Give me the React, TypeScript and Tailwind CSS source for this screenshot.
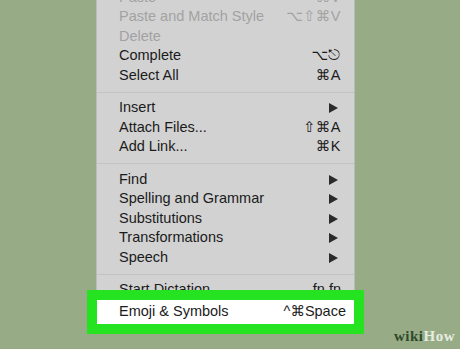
import type { ReactNode } from "react";

type Item = {
  label: string;
  shortcut?: string;
  submenu?: boolean;
  disabled?: boolean;
};

const groups: Item[][] = [
  [
    { label: "Paste", shortcut: "⌘V", disabled: true },
    { label: "Paste and Match Style", shortcut: "⌥⇧⌘V", disabled: true },
    { label: "Delete", disabled: true },
    { label: "Complete", shortcut: "⌥⎋" },
    { label: "Select All", shortcut: "⌘A" },
  ],
  [
    { label: "Insert", submenu: true },
    { label: "Attach Files...", shortcut: "⇧⌘A" },
    { label: "Add Link...", shortcut: "⌘K" },
  ],
  [
    { label: "Find", submenu: true },
    { label: "Spelling and Grammar", submenu: true },
    { label: "Substitutions", submenu: true },
    { label: "Transformations", submenu: true },
    { label: "Speech", submenu: true },
  ],
];

function Row({ item }: { item: Item }) {
  const color = item.disabled ? "text-[#a2a2a2]" : "text-[#1b1b1b]";
  return (
    <div className={`flex h-[19.5px] items-center justify-between pl-[22px] ${item.submenu ? "pr-4" : "pr-[13px]"} ${color}`}>
      <span>{item.label}</span>
      {item.submenu ? (
        <svg width="9" height="10" viewBox="0 0 9 10" className="text-[#2a2a2a]">
          <path d="M0 0 L9 5 L0 10 Z" fill="currentColor" />
        </svg>
      ) : (
        <span className="tracking-[0.5px]">{item.shortcut}</span>
      )}
    </div>
  );
}

function Separator() {
  return (
    <div className="flex h-[13px] items-center">
      <div className="h-px w-full bg-[#c3c3c3]" />
    </div>
  );
}

function Highlight({ children }: { children: ReactNode }) {
  return (
    <div className="relative z-10 bg-white outline-[10px] outline-solid outline-[#25e321]">
      {children}
    </div>
  );
}

export default function App() {
  return (
    <div className="relative h-[349px] w-[460px] overflow-hidden bg-[#97ac86] font-['Liberation_Sans','DejaVu_Sans',sans-serif] text-[14.5px]">
      <div className="ml-[96px] -mt-[12px] w-[259px] border-x border-[#b9bdb4] bg-[#d2d2d2]">
        {groups.map((g, i) => (
          <div key={i}>
            {g.map((item) => (
              <Row key={item.label} item={item} />
            ))}
            <Separator />
          </div>
        ))}
        <div className="flex h-[19px] items-center justify-between pl-[22px] pr-[13px] text-[#1b1b1b]">
          <span>Start Dictation</span>
          <span>fn fn</span>
        </div>
        <Highlight>
          <div className="flex h-[24px] items-center justify-between pl-[22px] pr-[8px] text-[#1b1b1b]">
            <span>Emoji &amp; Symbols</span>
            <span>^⌘Space</span>
          </div>
        </Highlight>
      </div>
      <div className="absolute right-[5px] bottom-[2px] font-['Liberation_Serif',serif] text-[15px] font-bold tracking-[0.5px]">
        <span className="text-[#2f4a2b]">wiki</span>
        <span className="text-[#e8ece2]">How</span>
      </div>
    </div>
  );
}
